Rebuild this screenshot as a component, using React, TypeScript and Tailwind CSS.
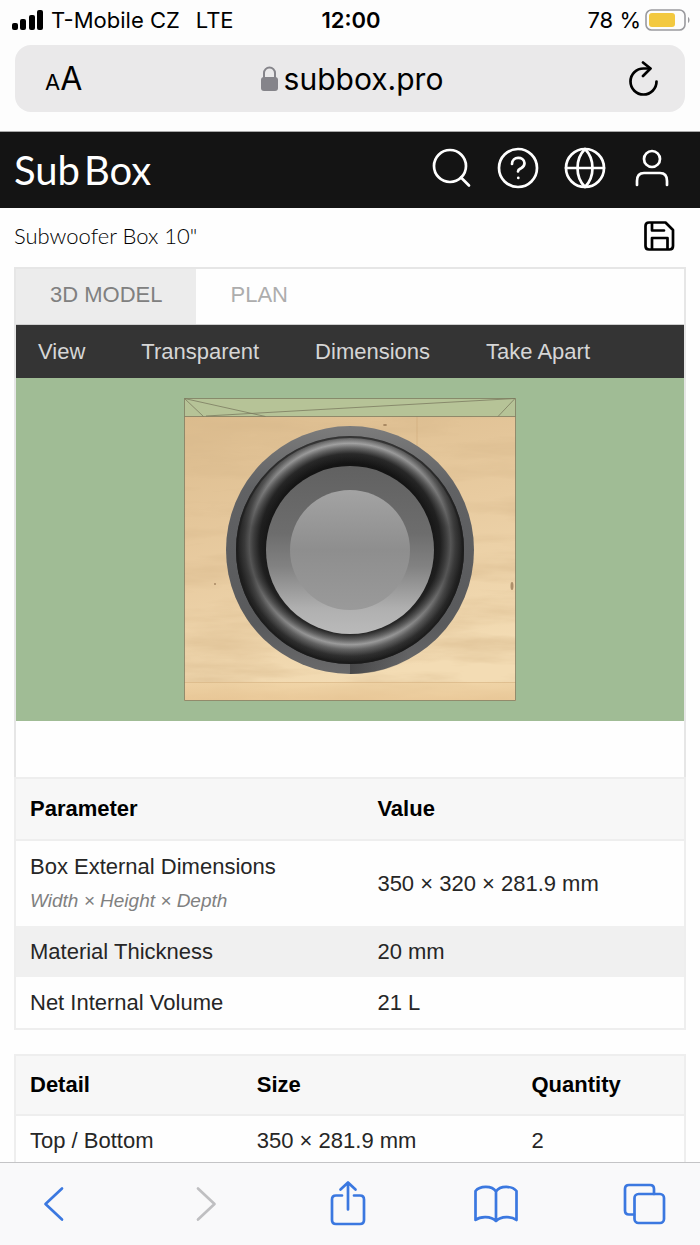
import { ReactNode, useState } from "react";

const tools = ["View", "Transparent", "Dimensions", "Take Apart"];

const details = [
    { name: "Top / Bottom", size: "350 × 281.9 mm", quantity: 2 },
];

function Icon({ children, className, box = "0 0 44 44", width = 2.7 }: { children: ReactNode; className: string; box?: string; width?: number }) {
    return (
        <svg xmlns="http://www.w3.org/2000/svg" viewBox={box} fill="none" stroke="currentColor" strokeWidth={width} strokeLinecap="round" strokeLinejoin="round" className={className} aria-hidden="true">
            {children}
        </svg>
    );
}

function StatusBar() {
    return (
        <div className="grid h-[39px] grid-cols-[1fr_auto_1fr] items-center pr-2.5 pl-3 text-[22px] leading-7 text-black">
            <div className="flex items-center gap-2 whitespace-nowrap">
                <svg viewBox="0 0 31 20" className="h-5 w-[31px]" aria-hidden="true">
                    <rect x="0" y="13" width="6" height="7" rx="2" />
                    <rect x="8" y="9" width="6" height="11" rx="2" />
                    <rect x="17" y="5" width="6" height="15" rx="2" />
                    <rect x="25" y="0" width="6" height="20" rx="2" />
                </svg>
                <span>T-Mobile CZ</span>
                <span className="pl-2">LTE</span>
            </div>
            <div className="text-center font-semibold">12:00</div>
            <div className="flex items-center justify-end gap-1 whitespace-nowrap">
                <span>78 %</span>
                <svg viewBox="0 0 45 22" className="h-[22px] w-[45px]" fill="none" aria-hidden="true">
                    <rect x="1" y="1" width="39" height="20" rx="5.500" stroke="#9a9a9e" strokeWidth="1.600" />
                    <rect x="4" y="4" width="26" height="14" rx="3" fill="#f3c940" />
                    <path d="M43 8c2 1 2 5 0 6z" fill="#9a9a9e" />
                </svg>
            </div>
        </div>
    );
}

function AddressBar() {
    return (
        <div className="px-[15px] pt-1.5 pb-[19px]">
            <div className="grid h-[67px] grid-cols-[1fr_auto_1fr] items-center rounded-2xl bg-[#eae9ea] px-6 text-black">
                <button type="button" aria-label="Text size" className="flex items-baseline justify-self-start pl-1.5">
                    <span className="text-[22px]">A</span>
                    <span className="text-[32px]">A</span>
                </button>
                <a href="#" className="flex items-center gap-1.5 pl-1 text-[30px] leading-9">
                    <svg viewBox="0 0 17 25" className="h-[25px] w-[17px]" fill="none" aria-hidden="true">
                        <path d="M3 12V7a5.500 5.500 0 0 1 11 0v5" stroke="#85848a" strokeWidth="2" />
                        <rect x="0" y="11" width="17" height="14" rx="3" fill="#85848a" />
                    </svg>
                    subbox.pro
                </a>
                <button type="button" aria-label="Reload" className="justify-self-end">
                    <Icon className="h-9 w-[34px]" box="0 0 34 36">
                        <path d="M29.500 20.500a13 13 0 1 1-13-13h6.500" />
                        <path d="M16 1.500l7.500 6-7.500 7.500" />
                    </Icon>
                </button>
            </div>
        </div>
    );
}

function Header() {
    return (
        <header className="flex h-[76px] items-center justify-between bg-[#141414] px-3.5 text-white">
            <a href="#" className="flex gap-1 font-['Lato'] text-[40px] leading-[52px]">
                <span>Sub</span>
                <span>Box</span>
            </a>
            <nav className="flex items-center gap-[23px] pr-3 pb-1">
                <button type="button" aria-label="Search">
                    <Icon className="size-11">
                        <circle cx="21" cy="20" r="16" />
                        <path d="M32 31.500l8 8" />
                    </Icon>
                </button>
                <button type="button" aria-label="Help">
                    <Icon className="size-11">
                        <circle cx="22" cy="22" r="19" />
                        <path d="M16 18c0-8 12-8 12.500-1 0 4-2 4.500-4 5.500-2 1-2.500 1.500-2.500 3M22.300 31.800v.1" />
                    </Icon>
                </button>
                <button type="button" aria-label="Language">
                    <Icon className="size-11">
                        <circle cx="22" cy="22" r="19" />
                        <path d="M3 22h38M22 3c-10 10-10 28 0 38M22 3c10 10 10 28 0 38" />
                    </Icon>
                </button>
                <button type="button" aria-label="Account">
                    <Icon className="size-11">
                        <circle cx="22" cy="13" r="8" />
                        <path d="M7 39v-4c0-5 2-8 7-8h16c5 0 7 3 7 8v4" />
                    </Icon>
                </button>
            </nav>
        </header>
    );
}

// front view of the enclosure, with the driver in the middle
function BoxModel() {
    return (
        <svg viewBox="0 0 668 343" className="block w-full bg-[#a0bc95]" role="img" aria-label="Subwoofer box model">
            <defs>
                <filter id="grain" x="0" y="0" width="1" height="1">
                    <feTurbulence type="fractalNoise" baseFrequency="0.008 0.050" numOctaves="5" seed="3" />
                    <feColorMatrix values="0 0 0 0 0.68  0 0 0 0 0.48  0 0 0 0 0.26  1.3 0 0 0 -0.5" />
                </filter>
                <linearGradient id="wood" x1="0" y1="0" x2="0.300" y2="1">
                    <stop offset="0" stopColor="#dcbc8e" />
                    <stop offset="0.500" stopColor="#e8cba0" />
                    <stop offset="1" stopColor="#f3dcb4" />
                </linearGradient>
                <linearGradient id="edge" x1="0" y1="0" x2="0" y2="1">
                    <stop offset="0" stopColor="#f0d3a4" />
                    <stop offset="1" stopColor="#e6c18e" />
                </linearGradient>
                <linearGradient id="frame" x1="0" y1="0" x2="0" y2="1">
                    <stop offset="0" stopColor="#7c7c7c" />
                    <stop offset="0.250" stopColor="#616264" />
                    <stop offset="0.800" stopColor="#595a5c" />
                    <stop offset="1" stopColor="#6a6a6b" />
                </linearGradient>
                <linearGradient id="seam" x1="0" y1="0" x2="1" y2="0">
                    <stop offset="0" stopColor="#3a3a3b" stopOpacity="0.700" />
                    <stop offset="1" stopColor="#3a3a3b" stopOpacity="0" />
                </linearGradient>
                <radialGradient id="tube" gradientUnits="userSpaceOnUse" cx="334" cy="166" r="122">
                    <stop offset="0.660" stopColor="#141414" />
                    <stop offset="0.740" stopColor="#2c2c2c" />
                    <stop offset="0.790" stopColor="#6e6e6e" />
                    <stop offset="0.825" stopColor="#a6a6a6" />
                    <stop offset="0.865" stopColor="#686868" />
                    <stop offset="0.920" stopColor="#303030" />
                    <stop offset="0.980" stopColor="#181818" />
                </radialGradient>
                <linearGradient id="tubeShade" x1="0" y1="0" x2="0" y2="1">
                    <stop offset="0" stopColor="#141414" stopOpacity="0" />
                    <stop offset="0.140" stopColor="#141414" stopOpacity="0.150" />
                    <stop offset="0.400" stopColor="#141414" stopOpacity="0.550" />
                    <stop offset="0.620" stopColor="#141414" stopOpacity="0.550" />
                    <stop offset="0.880" stopColor="#141414" stopOpacity="0.100" />
                    <stop offset="1" stopColor="#141414" stopOpacity="0" />
                </linearGradient>
                <linearGradient id="cone" x1="0" y1="0" x2="0" y2="1">
                    <stop offset="0" stopColor="#616161" />
                    <stop offset="0.400" stopColor="#6d6d6d" />
                    <stop offset="0.600" stopColor="#828282" />
                    <stop offset="0.850" stopColor="#b0b0b0" />
                    <stop offset="1" stopColor="#bababa" />
                </linearGradient>
                <linearGradient id="cap" x1="0" y1="0" x2="0" y2="1">
                    <stop offset="0" stopColor="#a3a3a3" />
                    <stop offset="0.500" stopColor="#8e8e8e" />
                    <stop offset="1" stopColor="#9a9a9a" />
                </linearGradient>
            </defs>
            <rect x="168" y="20" width="332" height="18" fill="#b6c397" />
            <rect x="168" y="38" width="332" height="285" fill="url(#wood)" />
            <rect x="168" y="38" width="332" height="285" filter="url(#grain)" />
            <rect x="168" y="304" width="332" height="19" fill="url(#edge)" opacity="0.700" />
            <path d="M168 304.500h332M401 38v70" stroke="#c79f6e" strokeOpacity="0.400" />
            <g fill="#6b4a2a" opacity="0.500">
                <ellipse cx="369" cy="47" rx="2" ry="1" />
                <ellipse cx="496" cy="208" rx="1.500" ry="4" />
                <ellipse cx="199" cy="206" rx="1" ry="1" />
            </g>
            <path d="M168.500 20.500h331v302h-331zM168.500 38.500h331M168.500 20.500l19 18M168.500 20.500l81 18M190 38l309-17.500-17 18" fill="none" stroke="#7c7c60" strokeOpacity="0.800" />
            <circle cx="334" cy="172" r="124" fill="url(#frame)" />
            <path d="M334 285v11a124 124 0 0 0 60-15l-5-10z" fill="url(#seam)" />
            <circle cx="334" cy="172" r="114" fill="url(#tube)" />
            <circle cx="334" cy="172" r="114" fill="url(#tubeShade)" />
            <circle cx="334" cy="172" r="113" fill="none" stroke="#1c1c1d" strokeWidth="2" opacity="0.600" />
            <circle cx="334" cy="172" r="84" fill="url(#cone)" />
            <circle cx="334" cy="172" r="60" fill="url(#cap)" />
        </svg>
    );
}

function ModelPanel() {
    const [tab, setTab] = useState("3D MODEL");
    return (
        <section className="border-2 border-b-0 border-[#e6e6e6] font-['Liberation_Sans',sans-serif]">
            <div className="flex h-14 border-b border-[#cfcfcf] text-[22px]">
                {["3D MODEL", "PLAN"].map((name) => (
                    <button
                        key={name}
                        type="button"
                        onClick={() => setTab(name)}
                        className={`px-[34px] pb-1 ${tab === name ? "bg-[#ececec] text-[#808080]" : "text-[#adadad]"}`}
                    >
                        {name}
                    </button>
                ))}
            </div>
            <div className="flex h-[53px] items-center gap-14 bg-[#343434] px-[22px] text-[22px] whitespace-nowrap text-[#d6d6d6]">
                {tools.map((tool) => (
                    <button key={tool} type="button">{tool}</button>
                ))}
            </div>
            <BoxModel />
            <div className="h-14"></div>
        </section>
    );
}

function ParameterTable() {
    return (
        <table className="w-full table-fixed border-2 border-[#eeeeee] text-left text-[22px] leading-7 text-[#262626]">
            <thead className="border-b-2 border-[#eeeeee] bg-[#f7f7f7] text-black">
                <tr className="h-[62px]">
                    <th className="w-[52%] px-3.5">Parameter</th>
                    <th className="px-3.5">Value</th>
                </tr>
            </thead>
            <tbody>
                <tr className="h-[86px]">
                    <td className="px-3.5">
                        <div>Box External Dimensions</div>
                        <div className="pt-1.5 text-[19px] leading-7 text-[#808080] italic">Width × Height × Depth</div>
                    </td>
                    <td className="px-3.5">350 × 320 × 281.9 mm</td>
                </tr>
                <tr className="h-[51px] bg-[#f0f0f0]">
                    <td className="px-3.5">Material Thickness</td>
                    <td className="px-3.5">20 mm</td>
                </tr>
                <tr className="h-[52px]">
                    <td className="px-3.5">Net Internal Volume</td>
                    <td className="px-3.5">21 L</td>
                </tr>
            </tbody>
        </table>
    );
}

function DetailTable() {
    return (
        <table className="mt-6 w-full table-fixed border-2 border-[#eeeeee] text-left text-[22px] leading-7 text-[#262626]">
            <thead className="border-b-2 border-[#eeeeee] bg-[#f7f7f7] text-black">
                <tr className="h-[60px]">
                    <th className="w-[34%] px-3.5">Detail</th>
                    <th className="w-[41%] px-3.5">Size</th>
                    <th className="px-3.5">Quantity</th>
                </tr>
            </thead>
            <tbody>
                {details.map((row) => (
                    <tr key={row.name} className="h-[51px]">
                        <td className="px-3.5">{row.name}</td>
                        <td className="px-3.5">{row.size}</td>
                        <td className="px-3.5">{row.quantity}</td>
                    </tr>
                ))}
            </tbody>
        </table>
    );
}

function BottomBar() {
    return (
        <nav className="flex h-[83px] shrink-0 items-center justify-between border-t border-[#c4c4c6] bg-[#f9f9fa] pr-[34px] pl-8 text-[#3b78e0]">
            <button type="button" aria-label="Back">
                <Icon className="size-11">
                    <path d="M30 6.500L13.500 22 30 37.500" />
                </Icon>
            </button>
            <button type="button" aria-label="Forward" disabled className="text-[#bfbfc1]">
                <Icon className="size-11">
                    <path d="M19 6.500L35.500 22 19 37.500" />
                </Icon>
            </button>
            <button type="button" aria-label="Share">
                <Icon className="h-12 w-11" box="0 0 44 48">
                    <path d="M17 15.500H11c-2.500 0-4 1.500-4 4V40c0 2.500 1.500 4 4 4h24c2.500 0 4-1.500 4-4V19.500c0-2.500-1.500-4-4-4h-6M23 29.500V2.500M15.500 9.500l7.500-7 7.500 7" />
                </Icon>
            </button>
            <button type="button" aria-label="Bookmarks">
                <Icon className="h-11 w-12" box="0 0 48 44">
                    <path d="M24 9.500C20 3.500 8 3.500 3.500 9v29c5-4 15.500-4 20.500 1 5-5 15.500-5 20.500-1V9C40 3.500 28 3.500 24 9.500zM24 9.500V39" />
                </Icon>
            </button>
            <button type="button" aria-label="Tabs">
                <Icon className="size-11">
                    <rect x="12.500" y="12" width="29.500" height="29" rx="4" />
                    <path d="M12 32.500H7c-2.500 0-4-1.500-4-4V7c0-2.500 1.500-4 4-4h21c2.500 0 4 1.500 4 4v5" />
                </Icon>
            </button>
        </nav>
    );
}

export default function App() {
    return (
        <div className="flex h-screen flex-col bg-[#fdfdfd] font-['Inter',sans-serif]">
            <div className="shrink-0 border-b border-[#a8a8a8]">
                <StatusBar />
                <AddressBar />
            </div>
            <div className="min-h-0 flex-1 overflow-y-auto bg-[#fefefe] [scrollbar-width:none]">
                <Header />
                <main className="px-3.5 font-['Liberation_Sans',sans-serif]">
                    <div className="flex h-[59px] items-center justify-between pr-2 pb-1">
                        <h1 className="font-['Lato'] text-[22px] leading-7 font-light text-black">Subwoofer Box 10"</h1>
                        <button type="button" aria-label="Save" className="text-black">
                            <Icon className="size-9" box="0 0 36 36">
                                <path d="M7 4.500h16.500l7.500 7.500v16c0 2.500-1 3.500-3.500 3.500H7c-2.500 0-3.500-1-3.500-3.500V8c0-2.500 1-3.500 3.500-3.500zM10 4.500v8h12M10 31.500V20h15.500v11.500" />
                            </Icon>
                        </button>
                    </div>
                    <ModelPanel />
                    <ParameterTable />
                    <DetailTable />
                </main>
            </div>
            <BottomBar />
        </div>
    );
}
